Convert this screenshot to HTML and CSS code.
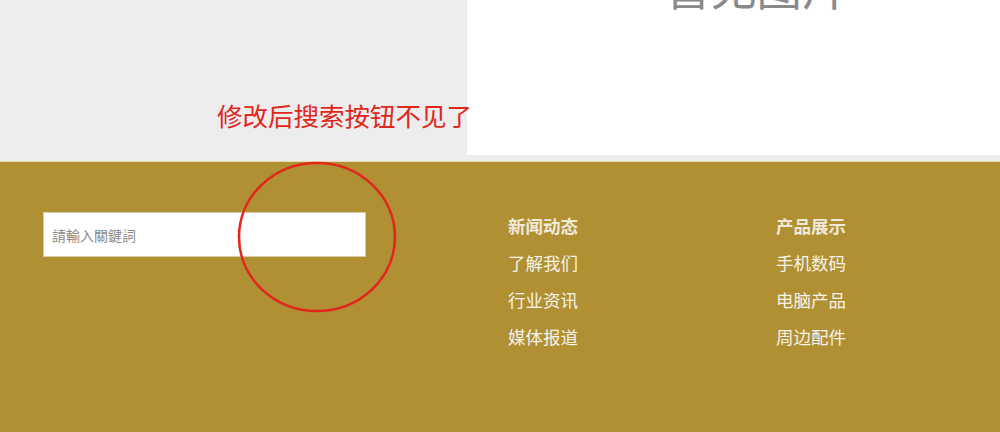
FILE: index.html
```html
<!DOCTYPE html>
<html lang="zh">
<head>
<meta charset="utf-8">
<link rel="stylesheet" href="styles.css">
</head>
<body>
<div class="page">
  <section class="top">
    <div class="top-left"></div>
    <div class="panel"><span class="noimg">暂无图片</span></div>
    <div class="note">修改后搜索按钮不见了</div>
  </section>
  <footer class="footer">
    <div class="search">
      <input class="search-input" type="text" placeholder="請輸入關鍵詞">
    </div>
    <ul class="col col-1">
      <li class="col-title">新闻动态</li>
      <li>了解我们</li>
      <li>行业资讯</li>
      <li>媒体报道</li>
    </ul>
    <ul class="col col-2">
      <li class="col-title">产品展示</li>
      <li>手机数码</li>
      <li>电脑产品</li>
      <li>周边配件</li>
    </ul>
    <svg class="ring" width="164" height="156" viewBox="0 0 164 156">
      <ellipse cx="82" cy="78" rx="78" ry="74" fill="none" stroke="#e2261b" stroke-width="2.6"/>
    </svg>
  </footer>
</div>
</body>
</html>
```
FILE: styles.css
```css
html, body {
  margin: 0;
  padding: 0;
}
body {
  width: 1000px;
  height: 432px;
  overflow: hidden;
  background: #ededed;
  font-family: "Noto Sans CJK SC", "Noto Sans", sans-serif;
}
.page {
  position: relative;
  width: 1000px;
  height: 432px;
}
.top {
  position: relative;
  display: flex;
  height: 161px;
  background: #ededed;
}
.top-left {
  width: 467px;
  flex: none;
}
.panel {
  flex: 1;
  height: 155px;
  background: #fff;
  overflow: hidden;
  display: flex;
  justify-content: center;
}
.noimg {
  display: block;
  margin-top: -44px;
  margin-left: 46px;
  font-size: 45.5px;
  line-height: 60px;
  color: #8a8a8a;
}
.note {
  position: absolute;
  left: 217px;
  top: 97px;
  font-size: 25.5px;
  line-height: 36px;
  color: #e2261b;
  white-space: nowrap;
}
.footer {
  position: relative;
  height: 270px;
  background: #b09033;
  border-top: 1px solid #e6d9b0;
  display: flex;
  align-items: flex-start;
}
.search {
  margin: 50px 0 0 43px;
  width: 323px;
  flex: none;
}
.search-input {
  box-sizing: border-box;
  width: 323px;
  height: 45px;
  border: 1px solid #d8cda8;
  background: #fff;
  padding: 0 8px;
  font-family: "Noto Sans CJK TC", "Noto Sans CJK SC", sans-serif;
  font-size: 14px;
  color: #555;
  outline: none;
}
.search-input::placeholder {
  color: #8a8a8a;
}
.col {
  list-style: none;
  margin: 0;
  padding: 0;
  margin-top: 45px;
  color: #f7f3e8;
  font-size: 17.5px;
  line-height: 37px;
}
.col-1 {
  margin-left: 142px;
}
.col-2 {
  margin-left: 198px;
}
.col-title {
  font-weight: bold;
  color: #efe9da;
}
.ring {
  position: absolute;
  left: 235px;
  top: -3px;
}
```
